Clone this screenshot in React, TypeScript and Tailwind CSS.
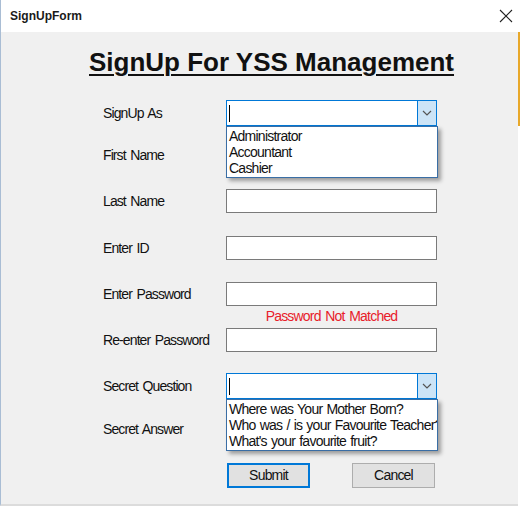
import React from "react";

const Chevron = () => (
  <svg width="10" height="6" viewBox="0 0 10 6" className="block">
    <path d="M1 1 L5 5 L9 1" fill="none" stroke="#555" strokeWidth="1.2" />
  </svg>
);

function Combo({ items }: { items: string[] }) {
  return (
    <div className="relative w-[211px] h-[26px] border border-[#0078d7] bg-white flex">
      <div className="flex-1 flex items-center pl-[2px]">
        <div className="w-[1px] h-[17px] bg-black" />
      </div>
      <div className="w-[19px] h-full bg-[#cce4f7] border-l border-[#0078d7] flex items-center justify-center">
        <Chevron />
      </div>
      <div className="absolute left-[-1px] top-[25px] w-[212px] border border-[#3a6ea5] bg-white shadow-[3px_3px_4px_rgba(0,0,0,0.35)] pt-[1px] pb-[1px] z-10 overflow-hidden">
        {items.map((t) => (
          <div key={t} className="h-[16px] leading-[16px] pl-[2px] whitespace-nowrap text-[14px] tracking-[-0.76px] [word-spacing:1px] text-[#111]">
            {t}
          </div>
        ))}
      </div>
    </div>
  );
}

const Label = ({ children }: { children: React.ReactNode }) => (
  <div className="w-[123px] text-[14px] tracking-[-0.9px] [word-spacing:1.5px] text-[#111] leading-[16px]">{children}</div>
);

const TextBox = () => <div className="w-[211px] h-[24px] border border-[#7a7a7a] bg-white" />;

export default function App() {
  return (
    <div className="w-[520px] h-[518px] bg-white flex font-['Liberation_Sans',Arial,sans-serif]">
      <div className="w-[518px] h-[506px] flex flex-col border-l border-[#a9bdd4] border-b-2 border-b-[#dcdcdc]">
        <div className="h-[32px] bg-white flex items-center justify-between pl-[9px] pr-[5px]">
          <span className="text-[12px] font-bold text-[#1a1a1a]">SignUpForm</span>
          <svg width="14" height="14" viewBox="0 0 14 14" className="block">
            <path d="M1 1 L13 13 M13 1 L1 13" stroke="#222" strokeWidth="1.1" fill="none" />
          </svg>
        </div>
        <div className="flex-1 bg-[#f0f0f0] flex flex-col">
          <div className="mt-[15px] pl-[88px] leading-[30px] text-[26px] font-bold underline underline-offset-[3px] decoration-2 text-[#111]">
            SignUp For YSS Management
          </div>
          <div className="pl-[102px] flex flex-col">
            <div className="mt-[23px] flex items-center h-[26px]">
              <Label>SignUp As</Label>
              <Combo items={["Administrator", "Accountant", "Cashier"]} />
            </div>
            <div className="mt-[17px] flex items-center h-[24px]">
              <Label>First Name</Label>
              <TextBox />
            </div>
            <div className="mt-[22px] flex items-center h-[24px]">
              <Label>Last Name</Label>
              <TextBox />
            </div>
            <div className="mt-[23px] flex items-center h-[24px]">
              <Label>Enter ID</Label>
              <TextBox />
            </div>
            <div className="mt-[22px] flex items-center h-[24px]">
              <Label>Enter Password</Label>
              <TextBox />
            </div>
            <div className="h-[22px] pt-[2px] ml-[123px] w-[211px] text-center text-[14px] tracking-[-0.8px] [word-spacing:1.5px] leading-[16px] text-[#e8202a]">
              Password Not Matched
            </div>
            <div className="flex items-center h-[24px]">
              <Label>Re-enter Password</Label>
              <TextBox />
            </div>
            <div className="mt-[21px] flex items-center h-[26px]">
              <Label>Secret Question</Label>
              <Combo
                items={[
                  "Where was Your Mother Born?",
                  "Who was / is your Favourite Teacher?",
                  "What's your favourite fruit?",
                ]}
              />
            </div>
            <div className="mt-[18px] flex items-center h-[24px]">
              <Label>Secret Answer</Label>
              <TextBox />
            </div>
            <div className="mt-[22px] flex h-[25px] ml-[124px] gap-[42px]">
              <button className="w-[83px] h-[25px] bg-[#e1e1e1] border-2 border-[#0078d7] text-[14px] tracking-[-0.8px] text-[#111] flex items-center justify-center">
                Submit
              </button>
              <button className="w-[83px] h-[25px] bg-[#e1e1e1] border border-[#adadad] text-[14px] tracking-[-0.8px] text-[#111] flex items-center justify-center">
                Cancel
              </button>
            </div>
          </div>
        </div>
      </div>
      <div className="w-[2px] flex flex-col">
        <div className="mt-[32px] h-[94px] bg-[#e8a82a]" />
      </div>
    </div>
  );
}
